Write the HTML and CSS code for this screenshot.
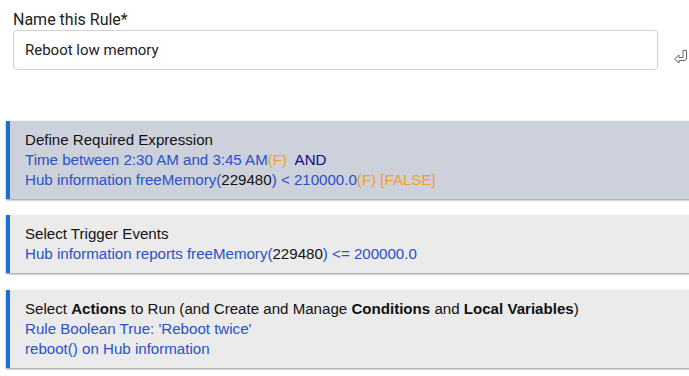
FILE: index.html
```html
<!DOCTYPE html>
<html lang="en">
<head>
  <meta charset="UTF-8">
  <title>Rule</title>
  <link rel="stylesheet" href="styles.css">
</head>
<body>
  <div class="rule-page">
    <div class="name-field">
      <label class="field-label" for="rule-name">Name this Rule*</label>
      <div class="input-row">
        <input id="rule-name" class="text-input" type="text" value="Reboot low memory">
        <svg class="enter-icon" width="16" height="17" viewBox="0 0 16 17">
          <path d="M10 1.5 h3.5 v7.5 a2.5 2.5 0 0 1 -2.5 2.5 h-5 v2.5 l-4.5 -4 l4.5 -4 v2.5 h4 z" fill="none" stroke="#666" stroke-width="1" stroke-linejoin="round"/>
        </svg>
      </div>
    </div>

    <div class="section-card card-blue">
      <div class="card-title">Define Required Expression</div>
      <div class="card-line">Time between 2:30 AM and 3:45 AM<span class="val-f">(F)</span>&nbsp; <span class="op">AND</span></div>
      <div class="card-line">Hub information freeMemory(<span class="num">229480</span>) &lt; 210000.0<span class="val-f">(F) [FALSE]</span></div>
    </div>

    <div class="section-card">
      <div class="card-title">Select Trigger Events</div>
      <div class="card-line">Hub information reports freeMemory(<span class="num">229480</span>) &lt;= 200000.0</div>
    </div>

    <div class="section-card card-actions">
      <div class="card-title">Select <b>Actions</b> to Run (and Create and Manage <b>Conditions</b> and <b>Local Variables</b>)</div>
      <div class="card-line">Rule Boolean True: 'Reboot twice'</div>
      <div class="card-line">reboot() on Hub information</div>
    </div>
  </div>
</body>
</html>
```

FILE: styles.css
```css
body {
  margin: 0;
  background: #fff;
  overflow: hidden;
  font-family: Roboto, "Liberation Sans", sans-serif;
}

.rule-page {
  display: flex;
  flex-direction: column;
  padding: 10px 0 0 6px;
}

.name-field {
  padding-left: 7px;
  margin-bottom: 51px;
}

.field-label {
  display: block;
  font-size: 16px;
  line-height: 20px;
  color: #222;
}

.input-row {
  display: flex;
  align-items: center;
  gap: 15px;
}

.text-input {
  box-sizing: border-box;
  width: 645px;
  height: 40px;
  margin: 0;
  padding: 0 11px;
  border: 1px solid #d2d2d2;
  border-radius: 4px;
  font-family: Roboto, sans-serif;
  font-size: 15px;
  color: #222;
  outline: none;
}

.enter-icon {
  margin-top: 14px;
}

.section-card {
  margin-right: -30px;
  margin-bottom: 16px;
  padding: 9px 0 9px 15px;
  border-left: 4px solid #1b6fd1;
  background: #ebebeb;
  box-shadow: 0 1px 2px rgba(0, 0, 0, 0.45);
  font-family: "Liberation Sans", Arial, sans-serif;
  font-size: 15.1px;
  line-height: 20px;
}

.card-blue {
  background: #cdd1dc;
}

.card-title {
  color: #111;
}

.card-line {
  color: #2852c8;
}

.val-f {
  color: #f5a01f;
}

.op {
  color: #0c0c80;
}

.num {
  color: #111;
}

.card-actions {
  margin-top: 1px;
}
```
